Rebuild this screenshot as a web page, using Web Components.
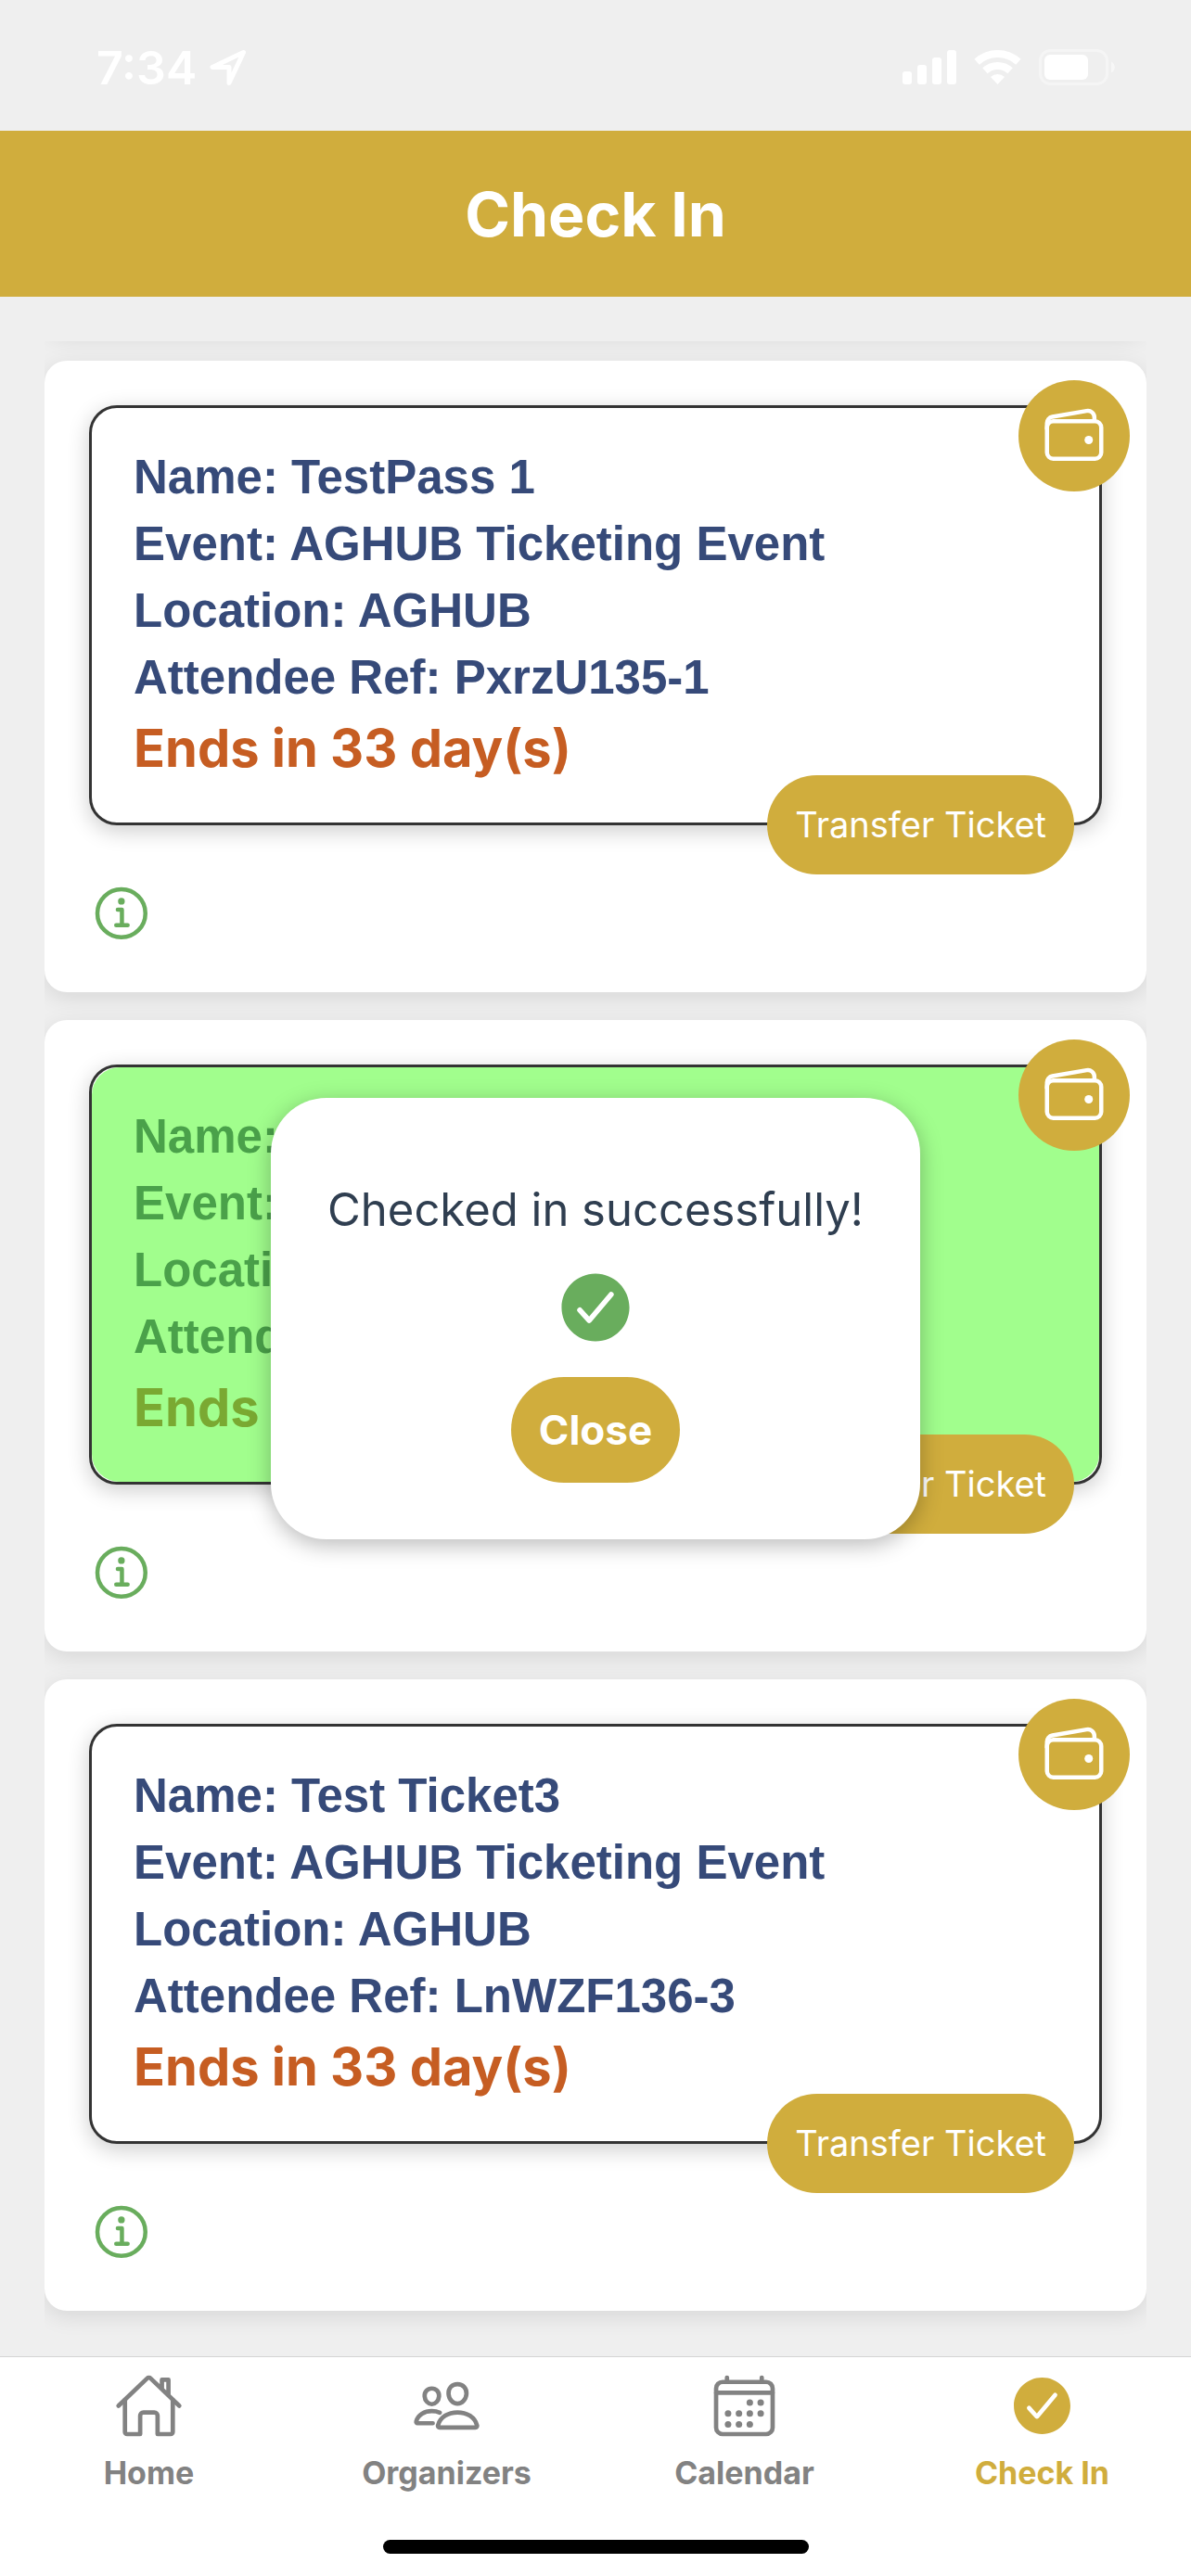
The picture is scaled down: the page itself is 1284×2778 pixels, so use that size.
<!DOCTYPE html>
<html lang="en">
<head>
<meta charset="utf-8">
<meta name="viewport" content="width=device-width, initial-scale=1">
<title>Check In</title>
<style>
  body {
    margin: 0;
    background: #efefef;
    font-family: Inter, "Liberation Sans", sans-serif;
    --gold: #d0ad3d;
    --green: #69ad5d;
    --grey: #828282;
  }
</style>
</head>
<body>
<checkin-app></checkin-app>

<script>
const ICONS = {
  info: `<g fill="none" stroke="currentColor" stroke-width="32" stroke-linecap="round" stroke-linejoin="round"><circle cx="248" cy="248" r="184" stroke-miterlimit="10"/><path d="M220 220h32v116"/><path d="M208 340h88"/></g><circle cx="248" cy="156" r="26" fill="currentColor"/>`,
  wallet: `<g fill="none" stroke="currentColor" stroke-width="32" stroke-linejoin="round"><rect x="48" y="144" width="416" height="288" rx="48"/><path d="M411.36 144v-30A50 50 0 0 0 352 64.9L88.64 109.85A50 50 0 0 0 48 159v49"/></g><circle cx="368" cy="288" r="32" fill="currentColor"/>`,
  check: `<path fill="currentColor" d="M256 48C141.31 48 48 141.31 48 256s93.31 208 208 208 208-93.31 208-208S370.69 48 256 48zm108.25 138.29l-134.4 160a16 16 0 0 1-12 5.71h-.27a16 16 0 0 1-11.89-5.3l-57.6-64a16 16 0 1 1 23.78-21.4l45.29 50.32 122.59-145.91a16 16 0 0 1 24.5 20.58z"/>`,
  home: `<g fill="none" stroke="currentColor" stroke-width="32" stroke-linecap="round" stroke-linejoin="round"><path d="M80 212v236a16 16 0 0 0 16 16h96V328a24 24 0 0 1 24-24h80a24 24 0 0 1 24 24v136h96a16 16 0 0 0 16-16V212"/><path d="M480 256L266.89 52c-5-5.28-16.69-5.34-21.78 0L32 256M400 179V64h-48v69"/></g>`,
  people: `<g fill="none" stroke="currentColor" stroke-width="32" stroke-linecap="round" stroke-linejoin="round"><path d="M402 168c-2.93 40.67-33.1 72-66 72s-63.12-31.32-66-72c-3-42.31 26.37-72 66-72s69 30.46 66 72z"/><path d="M336 304c-65.17 0-127.84 32.37-143.54 95.41-2.08 8.34 3.15 16.59 11.72 16.59h263.65c8.57 0 13.77-8.25 11.72-16.59C463.85 335.36 401.18 304 336 304z"/><path d="M200 185.94c-2.34 32.48-26.72 58.06-53 58.06s-50.7-25.57-53-58.06C91.61 152.15 115.34 128 147 128s55.39 24.77 53 57.94z"/><path d="M206 306c-18.05-8.27-37.93-11.45-59-11.45-52 0-102.1 25.85-114.65 76.2-1.65 6.66 2.53 13.25 9.37 13.25H154"/></g>`,
  calendar: `<g fill="none" stroke="currentColor" stroke-width="32" stroke-linecap="round" stroke-linejoin="round"><rect x="48" y="80" width="416" height="384" rx="48"/><path d="M128 48v32M384 48v32M464 160H48"/></g><g fill="currentColor"><circle cx="296" cy="232" r="24"/><circle cx="376" cy="232" r="24"/><circle cx="296" cy="312" r="24"/><circle cx="376" cy="312" r="24"/><circle cx="136" cy="312" r="24"/><circle cx="216" cy="312" r="24"/><circle cx="136" cy="392" r="24"/><circle cx="216" cy="392" r="24"/><circle cx="296" cy="392" r="24"/></g>`
};

class Base extends HTMLElement {
  connectedCallback() {
    if (this.shadowRoot) return;
    this.attachShadow({ mode: "open" }).innerHTML = this.render();
  }
}

customElements.define("app-icon", class extends Base {
  render() {
    return `<style>
      :host { display: block; width: 72px; height: 72px; }
      svg { display: block; width: 100%; height: 100%; }
    </style><svg viewBox="0 0 512 512" aria-hidden="true">${ICONS[this.getAttribute("name")]}</svg>`;
  }
});

customElements.define("status-bar", class extends Base {
  render() {
    return `<style>
      :host { display: flex; justify-content: space-between; box-sizing: border-box; height: 141px; padding: 43px 81px 38px 104px; color: #fff; }
      div { display: flex; align-items: center; gap: 14px; }
      .right { gap: 19px; }
      time { font-size: 50px; line-height: 60px; font-weight: 600; }
      svg { display: block; }
    </style>
    <div><time>7:34</time>
      <svg width="40" height="40" viewBox="0 0 40 40" fill="none" stroke="currentColor" stroke-width="5" stroke-linejoin="round"><path d="M36.5 3.5L3 19.5h18v17z"/></svg>
    </div>
    <div class="right">
      <svg width="58" height="40" fill="currentColor"><rect y="24" width="10" height="14" rx="3"/><rect x="16" y="17" width="10" height="21" rx="3"/><rect x="32" y="9" width="10" height="29" rx="3"/><rect x="48" y="1" width="10" height="37" rx="3"/></svg>
      <svg width="51" height="40" fill="none" stroke="currentColor" stroke-width="8"><path d="M3.100 13.700A33 33 0 0 1 47.900 13.700M11.900 23.300A20 20 0 0 1 39.100 23.300"/><path d="M25.500 38l-7.500-8.100a11 11 0 0 1 15 0z" fill="currentColor" stroke="none"/></svg>
      <svg width="83" height="40"><rect x="1.500" y="1.500" width="72" height="36" rx="11" fill="none" stroke="#fff" stroke-opacity=".4" stroke-width="3"/><rect x="6" y="6" width="47" height="27" rx="6" fill="#fff"/><path d="M78 13.500c5 2 5 10 0 12z" fill="#fff" fill-opacity=".5"/></svg>
    </div>`;
  }
});

customElements.define("page-header", class extends Base {
  render() {
    return `<style>
      :host { display: flex; align-items: center; justify-content: center; height: 179px; background: var(--gold); color: #fff; }
      h1 { margin: 0; font-size: 66px; line-height: 80px; font-weight: 700; }
    </style><h1><slot></slot></h1>`;
  }
});

customElements.define("pill-button", class extends Base {
  render() {
    return `<style>
      :host { display: block; font-size: 38px; line-height: 47px; font-weight: 400; }
      button { display: block; margin: 0; border: 0; padding: 30px; border-radius: 60px; background: var(--gold); color: #fff; font: inherit; white-space: nowrap; }
    </style><button type="button"><slot></slot></button>`;
  }
});

customElements.define("ticket-card", class extends Base {
  render() {
    return `<style>
      :host { display: block; padding: 48px; border-radius: 24px; background: #fff; box-shadow: 0 6px 23px rgba(0,0,0,.1); color: #364a79; --ends: #c65d22; }
      :host([checked]) { color: #4aa14a; --ends: #7aa932; }
      .frame { position: relative; border: 3px solid #333; border-radius: 30px; background: #fff; box-shadow: 0 6px 23px rgba(0,0,0,.2); }
      .body { padding: 39px 45px 40px; border-radius: 30px; }
      :host([checked]) .body { background: #a1fe8d; }
      p { margin: 0; font: 700 51px/72px "Liberation Sans", Arial, sans-serif; }
      .ends { font: 700 56px/80px Inter, "Liberation Sans", sans-serif; color: var(--ends); }
      button { margin: 0; border: 0; padding: 0; background: none; color: var(--green); }
      .wallet { position: absolute; top: -30px; right: -33px; display: grid; place-items: center; width: 120px; height: 120px; border-radius: 50%; background: var(--gold); color: #fff; }
      pill-button { position: absolute; right: 27px; bottom: -56px; }
      .info { display: block; margin-top: 60px; }
    </style>
    <div class="frame">
      <div class="body">
        <p>Name: ${this.getAttribute("name")}</p>
        <p>Event: ${this.getAttribute("event")}</p>
        <p>Location: ${this.getAttribute("location")}</p>
        <p>Attendee Ref: ${this.getAttribute("ref")}</p>
        <p class="ends">Ends in ${this.getAttribute("days")} day(s)</p>
      </div>
      <button class="wallet" type="button" aria-label="Add to wallet"><app-icon name="wallet"></app-icon></button>
      <pill-button>Transfer Ticket</pill-button>
    </div>
    <button class="info" type="button" aria-label="Ticket details"><app-icon name="info"></app-icon></button>`;
  }
});

/* Scrolled list: the ::before is the foot of the card above the fold, whose shadow still shows. */
customElements.define("ticket-list", class extends Base {
  render() {
    return `<style>
      :host { display: flex; flex-direction: column; gap: 30px; margin: 48px 48px 0; padding-bottom: 48px; overflow: hidden; }
      :host::before { content: ""; flex: none; height: 60px; margin-top: -69px; border-radius: 24px; background: #fff; box-shadow: 0 6px 23px rgba(0,0,0,.1); }
    </style><slot></slot>`;
  }
});

customElements.define("tab-item", class extends Base {
  render() {
    return `<style>
      :host { flex: 1 1 0; display: block; color: var(--grey); }
      :host([active]) { color: var(--gold); }
      a { display: flex; flex-direction: column; align-items: center; gap: 15px; color: inherit; text-decoration: none; font-size: 34px; line-height: 40px; font-weight: 700; }
      app-icon { width: 75px; height: 75px; }
    </style><a href="#"><app-icon name="${this.getAttribute("icon")}"></app-icon><span><slot></slot></span></a>`;
  }
});

customElements.define("tab-bar", class extends Base {
  render() {
    return `<style>
      :host { display: flex; flex-direction: column; justify-content: space-between; box-sizing: border-box; height: 237px; margin-top: auto; padding: 15px 0 24px; border-top: 1px solid #d4d4d4; background: #fff; }
      nav { display: flex; }
      .handle { align-self: center; width: 459px; height: 15px; border-radius: 8px; background: #000; }
    </style><nav><slot></slot></nav><div class="handle"></div>`;
  }
});

customElements.define("result-dialog", class extends Base {
  render() {
    return `<style>
      :host { position: fixed; inset: 66px 0 0; display: flex; align-items: center; justify-content: center; }
      section { display: flex; flex-direction: column; align-items: center; gap: 30px; box-sizing: border-box; min-width: 700px; padding: 91px 60px 61px; border-radius: 60px; background: #fff; box-shadow: 0 6px 24px rgba(0,0,0,.28); }
      p { margin: 0; font-size: 49px; line-height: 60px; color: #2f3e50; }
      app-icon { width: 90px; height: 90px; color: var(--green); }
      pill-button { font-size: 44px; line-height: 54px; font-weight: 700; }
    </style>
    <section role="dialog" aria-label="Check in result">
      <p><slot></slot></p>
      <app-icon name="check"></app-icon>
      <pill-button>Close</pill-button>
    </section>`;
  }
});

customElements.define("checkin-app", class extends Base {
  render() {
    return `<style>
      :host { display: flex; flex-direction: column; min-height: 100vh; }
    </style>
    <status-bar></status-bar>
    <page-header>Check In</page-header>
    <ticket-list>
      <ticket-card name="TestPass 1" event="AGHUB Ticketing Event" location="AGHUB" ref="PxrzU135-1" days="33"></ticket-card>
      <ticket-card checked name="Test Ticket2" event="AGHUB Ticketing Event" location="AGHUB" ref="LnWZF136-2" days="33"></ticket-card>
      <ticket-card name="Test Ticket3" event="AGHUB Ticketing Event" location="AGHUB" ref="LnWZF136-3" days="33"></ticket-card>
    </ticket-list>
    <tab-bar>
      <tab-item icon="home">Home</tab-item>
      <tab-item icon="people">Organizers</tab-item>
      <tab-item icon="calendar">Calendar</tab-item>
      <tab-item icon="check" active>Check In</tab-item>
    </tab-bar>
    <result-dialog>Checked in successfully!</result-dialog>`;
  }
});
</script>
</body>
</html>
